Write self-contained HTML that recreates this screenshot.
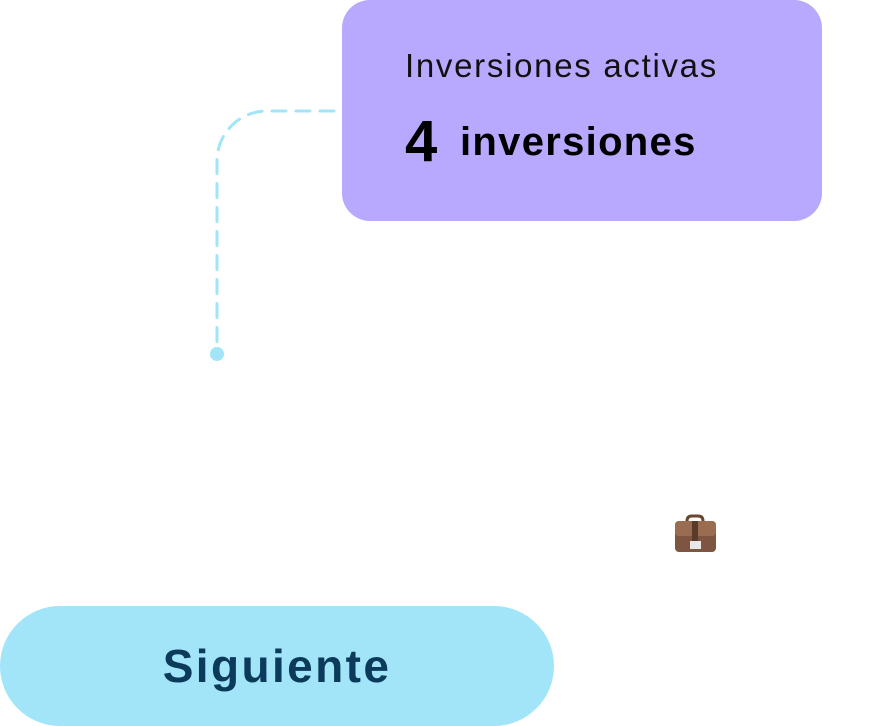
<!DOCTYPE html>
<html><head><style>
body{margin:0;width:894px;height:726px;background:#fff;position:relative;overflow:hidden;font-family:"Liberation Sans",sans-serif}
.box{position:absolute;left:342px;top:0;width:480px;height:221px;background:#b8a9fe;border-radius:28px}
.t1{position:absolute;left:405px;top:47px;font-size:33px;letter-spacing:1.7px;color:#111}
.n4{position:absolute;left:405px;top:108px;font-size:58px;font-weight:bold;color:#000}
.t2{position:absolute;left:460px;top:120px;font-size:40px;font-weight:bold;letter-spacing:1.3px;color:#000}
.btn{position:absolute;left:0;top:606px;width:554px;height:120px;background:#a2e5f8;border-radius:60px;text-align:center;line-height:120px;font-size:46px;font-weight:bold;letter-spacing:2.4px;color:#0b3a5a}
</style></head><body>
<svg width="894" height="726" style="position:absolute;left:0;top:0">
<path d="M334 111 H268 A50 50 0 0 0 217 161 V345" fill="none" stroke="#a2e5f8" stroke-width="3" stroke-dasharray="14 10" stroke-linecap="round"/>
<circle cx="217" cy="354" r="7" fill="#a2e5f8"/>
<g transform="translate(674,515)">
<path d="M13 6 Q13 1 18 1 H24 Q29 1 29 6" fill="none" stroke="#6a4630" stroke-width="3"/>
<rect x="1" y="6" width="41" height="31" rx="4" fill="#7d5540"/>
<rect x="1" y="6" width="41" height="15" rx="4" fill="#9a6d52"/>
<rect x="18" y="6" width="6" height="22" fill="#5a3b28"/>
<rect x="16" y="26" width="11" height="8" fill="#e8e8e8"/>
</g>
</svg>
<div class="box"></div>
<div class="t1">Inversiones activas</div>
<div class="n4">4</div>
<div class="t2">inversiones</div>
<div class="btn">Siguiente</div>
</body></html>
